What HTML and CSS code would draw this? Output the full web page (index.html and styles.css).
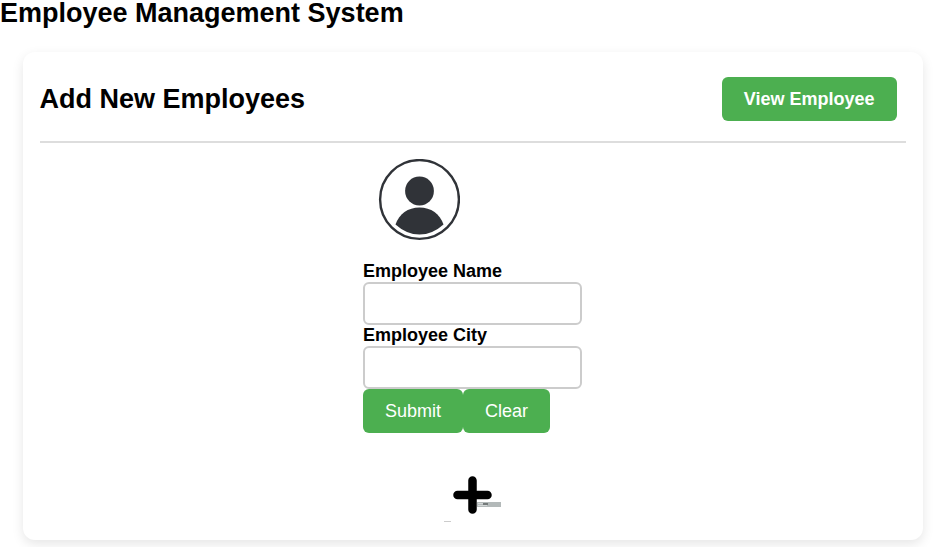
FILE: index.html
```html
<!DOCTYPE html>
<html lang="en">
<head>
<meta charset="utf-8">
<meta name="viewport" content="width=device-width, initial-scale=1">
<title>Employee Management System</title>
<link rel="stylesheet" href="styles.css">
</head>
<body>
<h1 class="page-title">Employee Management System</h1>
<main class="card">
  <header class="card-header">
    <h2 class="card-title">Add New Employees</h2>
    <button class="button button-strong" type="button">View Employee</button>
  </header>
  <form class="employee-form">
    <svg class="avatar" viewBox="0 0 82 82" aria-hidden="true">
      <circle cx="41.500" cy="40.500" r="39.400" fill="none" stroke="#303338" stroke-width="2.400"/>
      <circle cx="41.500" cy="32" r="14.400" fill="#303338"/>
      <path d="M17.500 65.500C21 55 30 48.500 41.500 48.500S62 55 65.500 65.500Q54.500 75.500 41.500 75.500T17.500 65.500Z" fill="#303338"/>
    </svg>
    <label class="label" for="name">Employee Name</label>
    <input class="field" id="name" type="text">
    <label class="label" for="city">Employee City</label>
    <input class="field" id="city" type="text">
    <div class="actions">
      <button class="button" type="button">Submit</button>
      <button class="button" type="reset">Clear</button>
    </div>
  </form>
  <svg class="plus" viewBox="0 0 60 48" aria-hidden="true">
    <path d="M14.500 20H44.500M29.500 5.500V34.500" fill="none" stroke="#000" stroke-width="8.500" stroke-linecap="round"/>
    <path d="M34 27H58V32H34Z" fill="#b3b9b9"/>
    <path d="M35 28.500H40M35 30.500H44" stroke="#d3d7d7" stroke-width="1"/>
    <path d="M40 28H45V30H40Z" fill="#747a7a"/>
    <path d="M1 46H8V47H1Z" fill="#ccc"/>
  </svg>
</main>
</body>
</html>
```
FILE: styles.css
```css
* {
  box-sizing: border-box;
}

body {
  margin: 0;
  padding-bottom: 7px;
  background: #fff;
  color: #000;
  font-family: "Liberation Sans", Arial, sans-serif;
  font-size: 18px;
}

.page-title,
.card-title {
  margin: 0;
  font-size: 27px;
  line-height: 26px;
}

.card {
  display: flex;
  flex-direction: column;
  align-items: center;
  max-width: 900px;
  margin: 26px auto 0;
  padding: 16px 17px 17px;
  border-radius: 12px;
  box-shadow: 0 4px 12px rgba(0, 0, 0, 0.1);
}

.card-header {
  display: flex;
  align-self: stretch;
  align-items: center;
  justify-content: space-between;
  padding: 9px 9px 20px 0;
  border-bottom: 2px solid #ddd;
}

.employee-form {
  display: flex;
  flex-direction: column;
  padding-top: 16px;
}

.avatar {
  width: 82px;
  height: 82px;
  margin: 0 0 20px 15px;
}

.label {
  font-weight: bold;
  line-height: 21px;
}

.field {
  width: 219px;
  height: 43px;
  padding: 10px;
  border: 2px solid #ccc;
  border-radius: 6px;
  background: #fff;
  font: inherit;
}

.actions {
  display: flex;
}

.button {
  height: 44px;
  padding: 0 22px;
  border: 0;
  border-radius: 6px;
  background: #4caf50;
  color: #fff;
  font: inherit;
  cursor: pointer;
}

.button-strong {
  font-weight: bold;
}

.plus {
  width: 60px;
  height: 48px;
  margin-top: 42px;
}
```
